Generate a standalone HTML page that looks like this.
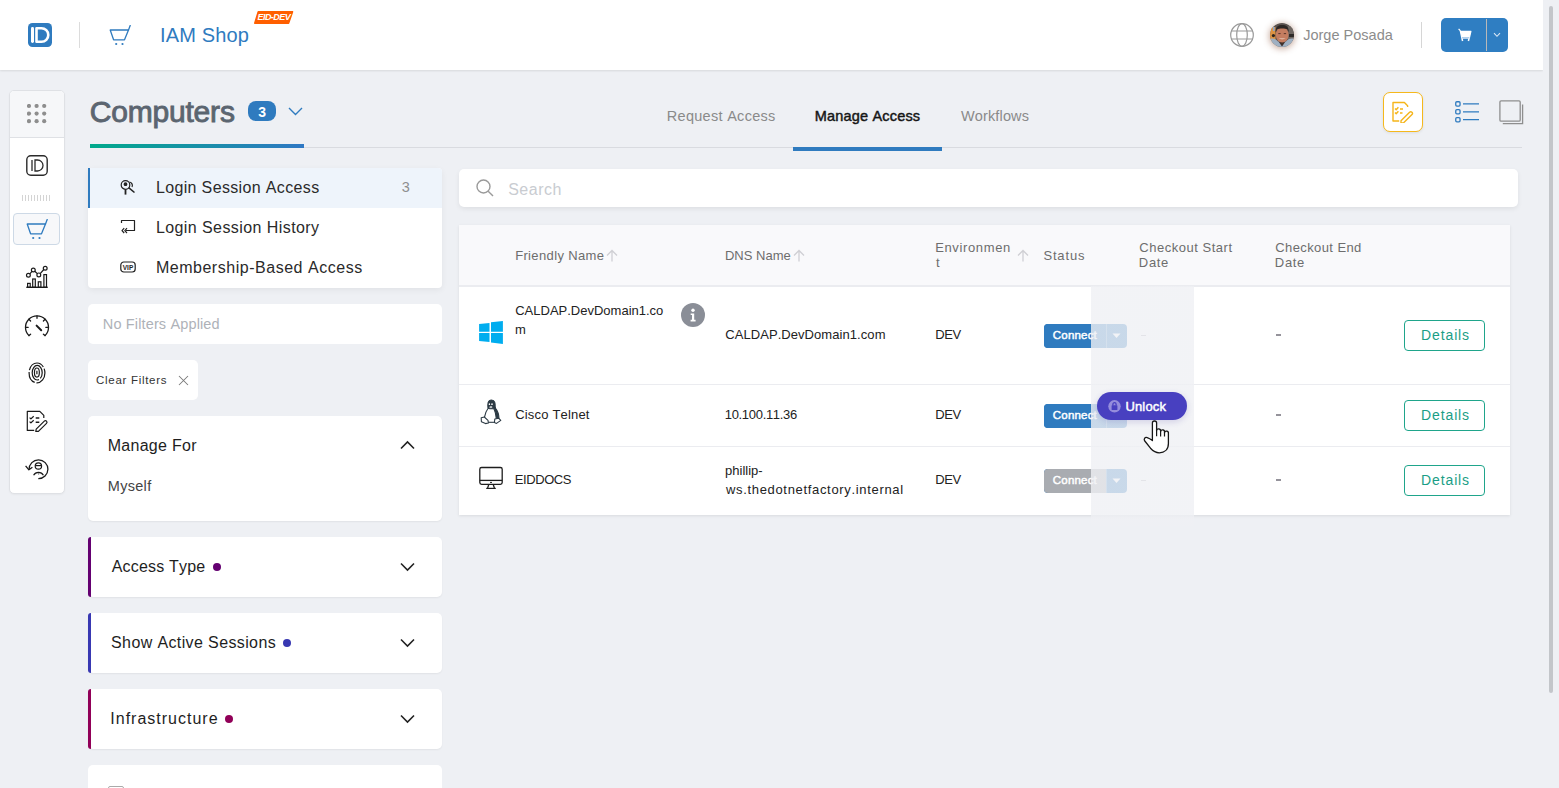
<!DOCTYPE html>
<html><head><meta charset="utf-8"><style>
html,body{margin:0;padding:0;}
body{width:1559px;height:788px;overflow:hidden;position:relative;background:#eef0f4;font-family:"Liberation Sans", sans-serif;font-kerning:none;}
.t{position:absolute;white-space:nowrap;font-family:"Liberation Sans", sans-serif;}
.b{position:absolute;}
</style></head><body>
<div class="b" style="left:0px;top:0px;width:1543px;height:70px;background:#fff;box-shadow:0 1px 2px rgba(0,0,0,0.10);"></div>
<svg class="b" style="left:28px;top:23px;" width="24" height="24" viewBox="0 0 24 24" ><rect x="0" y="0" width="24" height="24" rx="4.5" fill="#2f7bbf"/><rect x="3" y="4" width="3" height="16" rx="1.4" fill="#fff"/><path d="M8.5 5.2 h5 a6.8 6.8 0 0 1 0 13.6 h-5 z" fill="none" stroke="#fff" stroke-width="2.6" stroke-linejoin="round"/></svg>
<div class="b" style="left:79px;top:22px;width:1px;height:26px;background:#dcdcdc;"></div>
<svg class="b" style="left:109px;top:25px;" width="22" height="21" viewBox="0 0 22 21" ><path d="M1.2 5 H19.5 L15.5 14.8 H4.6 Z" fill="none" stroke="#2f7bbf" stroke-width="1.3" stroke-linejoin="round"/><path d="M19.5 5 L21.2 0.5" stroke="#2f7bbf" stroke-width="1.3" stroke-linecap="round"/><circle cx="7.2" cy="19" r="1.1" fill="#2f7bbf"/><circle cx="13.5" cy="19" r="1.1" fill="#2f7bbf"/></svg>
<div class="t" style="left:159.95px;top:22px;font-size:20px;line-height:26px;color:#2f7bbf;letter-spacing:0.166px;">IAM Shop</div>
<svg class="b" style="left:254px;top:11px;" width="40" height="13" viewBox="0 0 40 13" ><path d="M4.2 0.7 H38.6 L34.6 12.3 H0.7 Z" fill="#ff5f00" stroke="#ff5f00" stroke-width="1.4" stroke-linejoin="round"/></svg>
<div class="t" style="left:257.40px;top:11px;font-size:9px;line-height:12px;color:#fff;letter-spacing:-0.507px;font-weight:700;font-style:italic;">EID-DEV</div>
<svg class="b" style="left:1230px;top:23px;" width="24" height="24" viewBox="0 0 24 24" ><g fill="none" stroke="#9a9a9a" stroke-width="1.2"><circle cx="12" cy="12" r="11.3"/><ellipse cx="12" cy="12" rx="5.3" ry="11.3"/><path d="M1.5 8 H22.5 M1.5 16 H22.5"/></g></svg>
<div class="b" style="left:1270px;top:23px;width:24px;height:24px;border-radius:50%;box-shadow:0 1px 6px 1px rgba(140,80,50,0.45);"></div>
<svg class="b" style="left:1270px;top:23px;" width="24" height="24" viewBox="0 0 24 24" ><defs><clipPath id="av"><circle cx="12" cy="12" r="12"/></clipPath></defs><g clip-path="url(#av)"><rect width="24" height="24" fill="#5a524e"/><rect x="0" y="4" width="5.5" height="14" fill="#dc9240"/><circle cx="3.4" cy="12.6" r="1.6" fill="#2a2522"/><rect x="3" y="4" width="1.6" height="4" fill="#8fa6c8"/><rect x="18" y="3" width="6" height="15" fill="#6e6661"/><rect x="19" y="11" width="5" height="3" fill="#2e2a28"/><path d="M0 24 L0.5 16 C3 15 6 16 8 18.5 L16 18.5 C18 16 21 15 24 16 L24 24 Z" fill="#9fb0c2"/><path d="M8.5 18.5 L12 23.5 L15.5 18.5 Z" fill="#3e302b"/><ellipse cx="12.2" cy="11.8" rx="6.4" ry="7.8" fill="#c47d60"/><path d="M5.6 9.5 C5.4 3.5 8.5 2 12.2 2 C16 2 19 3.3 18.8 9.5 L17.6 6.5 C15 5.3 9.5 5.3 6.8 6.5 Z" fill="#2c2624"/><path d="M8.6 15 Q12.2 17.6 15.8 15 Q12.2 16.2 8.6 15 Z" fill="#f2e2d6"/><path d="M8.3 10.6 H10.6 M13.8 10.6 H16.1" stroke="#4e2f26" stroke-width="0.9"/></g></svg>
<div class="t" style="left:1303.17px;top:26px;font-size:14.5px;line-height:19px;color:#8c8c8c;letter-spacing:0.014px;">Jorge Posada</div>
<div class="b" style="left:1421px;top:22px;width:1px;height:26px;background:#d6d6d6;"></div>
<div class="b" style="left:1441px;top:18px;width:67px;height:34px;background:#2f7ec2;border-radius:5px;"></div>
<div class="b" style="left:1486px;top:19px;width:1px;height:32px;background:#b9b9b9;"></div>
<svg class="b" style="left:1458px;top:28px;" width="14" height="14" viewBox="0 0 14 14" ><path d="M0.6 0.8 L2.2 2.6 L3.9 10.3 H11.3 L12.9 3.3 H2.7" fill="#fff" stroke="#fff" stroke-width="1.2" stroke-linejoin="round"/><rect x="3.9" y="9.2" width="7.5" height="1.6" fill="#9cc3e6"/><path d="M4 10.5 L4.6 13 M11 10.5 L10.4 13" stroke="#fff" stroke-width="1.5"/></svg>
<svg class="b" style="left:1493px;top:32px;" width="8" height="6" viewBox="0 0 8 6" ><path d="M1 1.2 L4 4.3 L7 1.2" fill="none" stroke="#dbe8f5" stroke-width="1.1"/></svg>
<div class="b" style="left:1543px;top:0px;width:16px;height:788px;background:#eef0f4;"></div>
<div class="b" style="left:1549px;top:6px;width:4px;height:687px;background:#c3c6ca;border-radius:2px;"></div>
<div class="b" style="left:9px;top:90px;width:56px;height:404px;background:#fff;border:1px solid #dfe1e5;border-radius:5px;box-sizing:border-box;box-shadow:0 1px 2px rgba(0,0,0,0.04);"></div>
<div class="b" style="left:10px;top:91px;width:54px;height:46px;background:#f6f7f9;border-radius:4px 4px 0 0;border-bottom:1px solid #dfe1e5;"></div>
<svg class="b" style="left:27px;top:104px;" width="20" height="20" viewBox="0 0 20 20" ><circle cx="2.0" cy="2.0" r="2.1" fill="#8e8e8e"/><circle cx="2.0" cy="9.6" r="2.1" fill="#8e8e8e"/><circle cx="2.0" cy="17.2" r="2.1" fill="#8e8e8e"/><circle cx="9.6" cy="2.0" r="2.1" fill="#8e8e8e"/><circle cx="9.6" cy="9.6" r="2.1" fill="#8e8e8e"/><circle cx="9.6" cy="17.2" r="2.1" fill="#8e8e8e"/><circle cx="17.2" cy="2.0" r="2.1" fill="#8e8e8e"/><circle cx="17.2" cy="9.6" r="2.1" fill="#8e8e8e"/><circle cx="17.2" cy="17.2" r="2.1" fill="#8e8e8e"/></svg>
<svg class="b" style="left:26px;top:155px;" width="22" height="21" viewBox="0 0 22 21" ><rect x="0.8" y="0.8" width="20.4" height="19.4" rx="4" fill="none" stroke="#2b2b2b" stroke-width="1.4"/><path d="M6 5 V16 M9 5 V16 H11.5 A5.5 5.5 0 0 0 11.5 5 Z" fill="none" stroke="#2b2b2b" stroke-width="1.3"/></svg>
<svg class="b" style="left:22px;top:195px;" width="30" height="6" viewBox="0 0 30 6" ><rect x="0.0" y="0" width="1" height="6" fill="#d4d4d4"/><rect x="3.0" y="0" width="1" height="6" fill="#d4d4d4"/><rect x="6.0" y="0" width="1" height="6" fill="#d4d4d4"/><rect x="9.0" y="0" width="1" height="6" fill="#d4d4d4"/><rect x="12.0" y="0" width="1" height="6" fill="#d4d4d4"/><rect x="15.0" y="0" width="1" height="6" fill="#d4d4d4"/><rect x="18.0" y="0" width="1" height="6" fill="#d4d4d4"/><rect x="21.0" y="0" width="1" height="6" fill="#d4d4d4"/><rect x="24.0" y="0" width="1" height="6" fill="#d4d4d4"/><rect x="27.0" y="0" width="1" height="6" fill="#d4d4d4"/></svg>
<div class="b" style="left:13px;top:213px;width:47px;height:32px;background:#f7f8fa;border:1px solid #cdd9e6;border-radius:4px;box-sizing:border-box;"></div>
<svg class="b" style="left:26px;top:219px;" width="22" height="21" viewBox="0 0 22 21" ><path d="M1.2 5 H19.5 L15.5 14.8 H4.6 Z" fill="none" stroke="#2f7bbf" stroke-width="1.3" stroke-linejoin="round"/><path d="M19.5 5 L21.2 0.5" stroke="#2f7bbf" stroke-width="1.3" stroke-linecap="round"/><circle cx="7.2" cy="19" r="1.1" fill="#2f7bbf"/><circle cx="13.5" cy="19" r="1.1" fill="#2f7bbf"/></svg>
<svg class="b" style="left:20px;top:258px;" width="35" height="40" viewBox="0 0 35 40" ><g fill="none" stroke="#1a1a1a" stroke-width="1.2"><circle cx="8.4" cy="17.3" r="1.9"/><circle cx="13.3" cy="12" r="1.9"/><circle cx="18.8" cy="16.9" r="1.9"/><circle cx="25.2" cy="10.2" r="1.9"/><path d="M9.8 16 L11.9 13.3 M14.8 13.3 L17.3 15.6 M20.2 15.6 L23.8 11.5"/><rect x="7.6" y="25.4" width="2.6" height="3.9"/><rect x="12.7" y="21" width="2.6" height="8.3"/><rect x="18.3" y="23.8" width="2.6" height="5.5"/><rect x="23.9" y="16.6" width="2.6" height="12.7"/><path d="M6.3 29.3 H27.7" stroke-width="1.4"/></g></svg>
<svg class="b" style="left:20px;top:305px;" width="35" height="40" viewBox="0 0 35 40" ><g fill="none" stroke="#1a1a1a" stroke-width="1.3" stroke-linecap="round"><path d="M9 30.6 A11.5 11.5 0 1 1 25 30.6"/><path d="M9 30.6 L10.6 29.2 M25 30.6 L23.4 29.2"/><path d="M17 10.9 V13.3 M5.6 22.3 H8.2 M28.4 22.3 H25.8 M8.9 14.3 L10.6 16 M25.1 14.3 L23.4 16"/><path d="M16.6 20.6 L21.2 25.2" stroke-width="2"/></g></svg>
<svg class="b" style="left:20px;top:355px;" width="35" height="35" viewBox="0 0 35 35" ><g fill="none" stroke="#1a1a1a" stroke-width="1.2"><ellipse cx="17" cy="17.9" rx="7.9" ry="9.9" stroke-dasharray="14.5 1.8 12.5 1.8 19 1.8 5.1"/><ellipse cx="17.2" cy="17.7" rx="5" ry="7.3" stroke-dasharray="6 1.8 31.5"/><ellipse cx="16.9" cy="17.6" rx="2.45" ry="4.6"/><path d="M16.9 15.8 V19.2"/></g></svg>
<svg class="b" style="left:20px;top:405px;" width="35" height="80" viewBox="0 0 35 80" ><g fill="none" stroke="#1a1a1a" stroke-width="1.2" stroke-linejoin="round"><path d="M14.2 25.4 H7.3 V6.3 H19.8 L23.8 10.3 V13"/><path d="M9.6 12.6 L10.9 13.9 L13.7 11.2 M9.6 16.6 L10.9 17.9 L13.7 15.2"/><path d="M15.7 13 H19.3 M15.7 17.2 H19.3" stroke-width="1.4"/><path d="M15.8 26.4 L16.2 24.2 L24.3 16.1 A1.55 1.55 0 0 1 26.5 18.3 L18.4 26.4 Z"/><path d="M9.1 64.3 A9.4 9.4 0 1 1 18.3 73.6" stroke-width="1.3"/><path d="M5.6 60.8 L8.9 64.8 L12.4 62.2" stroke-width="1.3"/><circle cx="18.4" cy="61" r="3.2"/><path d="M15.3 60.6 H21.5"/><path d="M13.6 70.2 A5.6 5.6 0 0 1 23.4 70.2"/></g><circle cx="18.6" cy="68.9" r="0.6" fill="#555"/></svg>
<div class="b" style="left:90px;top:147px;width:1432px;height:1px;background:#d9dbe0;"></div>
<div class="t" style="left:89.78px;top:92px;font-size:30px;line-height:39px;color:#5b6570;letter-spacing:-0.201px;-webkit-text-stroke:0.9px #5b6570;">Computers</div>
<div class="b" style="left:248px;top:101px;width:28px;height:20px;background:#2f7bbf;border-radius:8px;"></div>
<div class="t" style="left:258.28px;top:103px;font-size:14px;line-height:19px;color:#fff;letter-spacing:0.000px;font-weight:700;">3</div>
<svg class="b" style="left:288px;top:107px;" width="15" height="9" viewBox="0 0 15 9" ><path d="M1 1 L7.5 7.5 L14 1" fill="none" stroke="#2f7bbf" stroke-width="1.4"/></svg>
<div class="b" style="left:90px;top:144px;width:214px;height:4px;background:linear-gradient(90deg,#00a98b,#2f78c4);"></div>
<div class="t" style="left:666.81px;top:107px;font-size:14.5px;line-height:19px;color:#8a8a8a;letter-spacing:0.288px;">Request Access</div>
<div class="t" style="left:814.81px;top:107px;font-size:14.5px;line-height:19px;color:#161616;letter-spacing:0.179px;-webkit-text-stroke:0.45px #161616;">Manage Access</div>
<div class="t" style="left:961.04px;top:107px;font-size:14.5px;line-height:19px;color:#8a8a8a;letter-spacing:0.128px;">Workflows</div>
<div class="b" style="left:793px;top:147px;width:149px;height:4px;background:#2f7bbf;"></div>
<div class="b" style="left:1383px;top:92px;width:40px;height:40px;background:#fff;border:1.5px solid #f5b81c;border-radius:7px;box-sizing:border-box;box-shadow:0 1px 3px rgba(0,0,0,0.08);"></div>
<svg class="b" style="left:1392px;top:101px;" width="22" height="22" viewBox="0 0 22 22" ><g fill="none" stroke="#f5b51a" stroke-width="1.4" stroke-linejoin="round"><path d="M7.2 20 H1 V1.5 H12.4 L15.6 4.7 V6"/><path d="M3 7.6 L4.2 8.8 L6.4 6.3 M3 11.6 L4.2 12.8 L6.4 10.3 M8 8 H11 M8 12 H10.5"/><path d="M9 19.8 L17.6 11.2 A1.7 1.7 0 0 1 20 13.6 L11.4 22 L9 22 Z"/></g></svg>
<svg class="b" style="left:1455px;top:101px;" width="25" height="22" viewBox="0 0 25 22" ><g fill="none" stroke="#2f7bbf" stroke-width="1.3"><rect x="0.75" y="0.75" width="4.3" height="4.3" rx="1.1"/><rect x="0.75" y="8.65" width="4.3" height="4.3" rx="1.1"/><rect x="0.75" y="16.55" width="4.3" height="4.3" rx="1.1"/><path d="M8 2.9 H24 M8 10.8 H24 M8 18.7 H24" stroke-width="1.3"/></g></svg>
<svg class="b" style="left:1499px;top:100px;" width="25" height="25" viewBox="0 0 25 25" ><g fill="none" stroke="#8e8e8e" stroke-width="1.3"><rect x="0.9" y="0.9" width="20.3" height="20.3" rx="1.2"/><path d="M23.6 4.5 V23.6 H3.8"/></g></svg>
<div class="b" style="left:88px;top:168px;width:354px;height:120px;background:#fff;border-radius:4px;box-shadow:0 2px 6px rgba(0,0,0,0.06);"></div>
<div class="b" style="left:88px;top:168px;width:354px;height:40px;background:#eef4fb;border-radius:4px 4px 0 0;"></div>
<div class="b" style="left:88px;top:168px;width:2px;height:40px;background:#2f7bbf;"></div>
<svg class="b" style="left:120px;top:179px;" width="16" height="17" viewBox="0 0 16 17" ><g fill="none" stroke="#222" stroke-width="1.2"><circle cx="5.5" cy="6" r="4.3"/><circle cx="5.5" cy="5.2" r="1.3" fill="#222"/><path d="M5.5 10.3 V15.6" stroke-width="1.8"/><path d="M8.6 8.6 L14.5 13.5" stroke-width="1.5"/><path d="M9.5 3 A3.5 3.5 0 0 1 12 8"/></g></svg>
<svg class="b" style="left:120px;top:219px;" width="16" height="17" viewBox="0 0 16 17" ><g fill="none" stroke="#222" stroke-width="1.2" stroke-linejoin="round"><path d="M1.5 4 V1.5 H14.5 V11.5 H6"/><path d="M4.2 9.2 L2 11.6 L4.2 14 M7 9.2 L4.8 11.6 L7 14"/></g></svg>
<svg class="b" style="left:120px;top:261px;" width="16" height="12" viewBox="0 0 16 12" ><g fill="none" stroke="#222" stroke-width="1.2"><rect x="0.8" y="1" width="14.4" height="10" rx="3"/></g><text x="8" y="8.6" font-size="6.5" font-weight="700" text-anchor="middle" fill="#222" font-family="Liberation Sans">VIP</text></svg>
<div class="t" style="left:155.89px;top:177px;font-size:16px;line-height:21px;color:#2a2a2a;letter-spacing:0.356px;">Login Session Access</div>
<div class="t" style="left:401.85px;top:178px;font-size:14.5px;line-height:19px;color:#8e8e8e;letter-spacing:0.000px;">3</div>
<div class="t" style="left:155.89px;top:217px;font-size:16px;line-height:21px;color:#2a2a2a;letter-spacing:0.425px;">Login Session History</div>
<div class="t" style="left:155.89px;top:257px;font-size:16px;line-height:21px;color:#2a2a2a;letter-spacing:0.525px;">Membership-Based Access</div>
<div class="b" style="left:88px;top:304px;width:354px;height:40px;background:#fff;border-radius:5px;"></div>
<div class="t" style="left:102.81px;top:315px;font-size:14.5px;line-height:19px;color:#aeb2b8;letter-spacing:0.141px;">No Filters Applied</div>
<div class="b" style="left:88px;top:360px;width:110px;height:40px;background:#fff;border-radius:5px;"></div>
<div class="t" style="left:96.02px;top:373px;font-size:11.5px;line-height:15px;color:#333;letter-spacing:0.710px;">Clear Filters</div>
<svg class="b" style="left:178px;top:375px;" width="11" height="11" viewBox="0 0 11 11" ><path d="M1 1 L10 10 M10 1 L1 10" stroke="#7a7a7a" stroke-width="1.05"/></svg>
<div class="b" style="left:88px;top:416px;width:354px;height:105px;background:#fff;border-radius:5px;box-shadow:0 1px 2px rgba(0,0,0,0.06);"></div>
<div class="t" style="left:107.69px;top:435px;font-size:16px;line-height:21px;color:#1e1e1e;letter-spacing:0.279px;">Manage For</div>
<svg class="b" style="left:400px;top:440px;" width="15" height="10" viewBox="0 0 15 10" ><path d="M1 8.5 L7.5 2 L14 8.5" fill="none" stroke="#222" stroke-width="1.6"/></svg>
<div class="t" style="left:107.81px;top:477px;font-size:14.5px;line-height:19px;color:#444;letter-spacing:0.295px;">Myself</div>
<div class="b" style="left:88px;top:537px;width:354px;height:60px;background:#fff;border-radius:5px;box-shadow:0 1px 2px rgba(0,0,0,0.06);"></div>
<div class="b" style="left:88px;top:537px;width:3px;height:60px;background:#640071;border-radius:3px 0 0 3px;"></div>
<div class="t" style="left:111.77px;top:556px;font-size:16px;line-height:21px;color:#1e1e1e;letter-spacing:0.176px;">Access Type</div>
<div class="b" style="left:212.8px;top:563px;width:8px;height:8px;border-radius:50%;background:#640071;"></div>
<svg class="b" style="left:400px;top:562px;" width="15" height="10" viewBox="0 0 15 10" ><path d="M1 1.5 L7.5 8 L14 1.5" fill="none" stroke="#222" stroke-width="1.6"/></svg>
<div class="b" style="left:88px;top:613px;width:354px;height:60px;background:#fff;border-radius:5px;box-shadow:0 1px 2px rgba(0,0,0,0.06);"></div>
<div class="b" style="left:88px;top:613px;width:3px;height:60px;background:#3838b2;border-radius:3px 0 0 3px;"></div>
<div class="t" style="left:111.07px;top:632px;font-size:16px;line-height:21px;color:#1e1e1e;letter-spacing:0.379px;">Show Active Sessions</div>
<div class="b" style="left:282.9px;top:639px;width:8px;height:8px;border-radius:50%;background:#3838b2;"></div>
<svg class="b" style="left:400px;top:638px;" width="15" height="10" viewBox="0 0 15 10" ><path d="M1 1.5 L7.5 8 L14 1.5" fill="none" stroke="#222" stroke-width="1.6"/></svg>
<div class="b" style="left:88px;top:689px;width:354px;height:60px;background:#fff;border-radius:5px;box-shadow:0 1px 2px rgba(0,0,0,0.06);"></div>
<div class="b" style="left:88px;top:689px;width:3px;height:60px;background:#910058;border-radius:3px 0 0 3px;"></div>
<div class="t" style="left:110.32px;top:708px;font-size:16px;line-height:21px;color:#1e1e1e;letter-spacing:1.002px;">Infrastructure</div>
<div class="b" style="left:225.0px;top:715px;width:8px;height:8px;border-radius:50%;background:#910058;"></div>
<svg class="b" style="left:400px;top:714px;" width="15" height="10" viewBox="0 0 15 10" ><path d="M1 1.5 L7.5 8 L14 1.5" fill="none" stroke="#222" stroke-width="1.6"/></svg>
<div class="b" style="left:88px;top:765px;width:354px;height:40px;background:#fff;border-radius:5px;"></div>
<div class="b" style="left:108px;top:786px;width:16px;height:16px;border:1px solid #aaa;border-radius:2px;box-sizing:border-box;"></div>
<div class="b" style="left:459px;top:169px;width:1059px;height:38px;background:#fff;border-radius:5px;box-shadow:0 2px 5px rgba(0,0,0,0.07);"></div>
<svg class="b" style="left:476px;top:179px;" width="18" height="18" viewBox="0 0 18 18" ><g fill="none" stroke="#9a9a9a" stroke-width="1.4"><circle cx="7.5" cy="7.5" r="6.5"/><path d="M12.2 12.2 L17 17"/></g></svg>
<div class="t" style="left:508.17px;top:179px;font-size:16px;line-height:21px;color:#c9ccd1;letter-spacing:0.514px;">Search</div>
<div class="b" style="left:459px;top:225px;width:1051px;height:290px;background:#fff;box-shadow:0 1px 3px rgba(0,0,0,0.09);"></div>
<div class="b" style="left:459px;top:225px;width:1051px;height:60px;background:#f9f9fb;"></div>
<div class="b" style="left:459px;top:285px;width:1051px;height:2px;background:#ebecf0;"></div>
<div class="b" style="left:459px;top:384px;width:1051px;height:1px;background:#ebecf0;"></div>
<div class="b" style="left:459px;top:446px;width:1051px;height:1px;background:#ebecf0;"></div>
<div class="t" style="left:515.13px;top:247px;font-size:13px;line-height:17px;color:#6d6d6d;letter-spacing:0.360px;">Friendly Name</div>
<svg class="b" style="left:606px;top:249px;" width="12" height="13" viewBox="0 0 12 13" ><path d="M6 12.5 V1.5 M1 6.5 L6 1.5 L11 6.5" fill="none" stroke="#cfcfd4" stroke-width="1.3"/></svg>
<div class="t" style="left:724.93px;top:247px;font-size:13px;line-height:17px;color:#6d6d6d;letter-spacing:0.015px;">DNS Name</div>
<svg class="b" style="left:793px;top:249px;" width="12" height="13" viewBox="0 0 12 13" ><path d="M6 12.5 V1.5 M1 6.5 L6 1.5 L11 6.5" fill="none" stroke="#cfcfd4" stroke-width="1.3"/></svg>
<div class="t" style="left:935.13px;top:239px;font-size:13px;line-height:17px;color:#6d6d6d;letter-spacing:0.649px;">Environmen</div>
<div class="t" style="left:936.00px;top:254px;font-size:13px;line-height:17px;color:#6d6d6d;letter-spacing:0.000px;">t</div>
<svg class="b" style="left:1017px;top:249px;" width="12" height="13" viewBox="0 0 12 13" ><path d="M6 12.5 V1.5 M1 6.5 L6 1.5 L11 6.5" fill="none" stroke="#cfcfd4" stroke-width="1.3"/></svg>
<div class="t" style="left:1043.41px;top:247px;font-size:13px;line-height:17px;color:#6d6d6d;letter-spacing:0.841px;">Status</div>
<div class="t" style="left:1139.24px;top:239px;font-size:13px;line-height:17px;color:#6d6d6d;letter-spacing:0.528px;">Checkout Start</div>
<div class="t" style="left:1138.83px;top:254px;font-size:13px;line-height:17px;color:#6d6d6d;letter-spacing:0.661px;">Date</div>
<div class="t" style="left:1275.24px;top:239px;font-size:13px;line-height:17px;color:#6d6d6d;letter-spacing:0.403px;">Checkout End</div>
<div class="t" style="left:1274.83px;top:254px;font-size:13px;line-height:17px;color:#6d6d6d;letter-spacing:0.661px;">Date</div>
<svg class="b" style="left:474px;top:316px;" width="34" height="34" viewBox="0 0 34 34" ><path d="M5.1 8 L15.5 6.9 V15.7 H5.1 Z M17 6.25 L28.9 5 V15.7 H17 Z M5.1 17 H15.5 V25.9 L5.1 24.9 Z M17 17 H28.9 V27.9 L17 26.5 Z" fill="#00adef"/></svg>
<div class="t" style="left:515.24px;top:302px;font-size:13px;line-height:17px;color:#222;letter-spacing:-0.001px;">CALDAP.DevDomain1.co</div>
<div class="t" style="left:515.04px;top:321px;font-size:13px;line-height:17px;color:#222;letter-spacing:0.000px;">m</div>
<div class="b" style="left:681px;top:303px;width:24px;height:24px;border-radius:50%;background:#8a8e97;"></div>
<svg class="b" style="left:681px;top:303px;" width="24" height="24" viewBox="0 0 24 24" ><circle cx="12" cy="7.3" r="1.7" fill="#fff"/><path d="M9.7 10.5 H13.2 V16.8 H14.6 V18.4 H9.6 V16.8 H11 V12.1 H9.7 Z" fill="#fff"/></svg>
<div class="t" style="left:725.24px;top:326px;font-size:13px;line-height:17px;color:#222;letter-spacing:0.064px;">CALDAP.DevDomain1.com</div>
<div class="t" style="left:935.33px;top:326px;font-size:13px;line-height:17px;color:#222;letter-spacing:-0.503px;">DEV</div>
<svg class="b" style="left:474px;top:394px;" width="34" height="34" viewBox="0 0 34 34" ><g stroke="#2c3a44" stroke-width="1.1" fill="none" stroke-linejoin="round"><path d="M14 14.2 C13.5 10 13.8 6 17.5 6 C21 6 21.3 9.5 21.2 13 L21.4 14.2 C19.5 14.8 16 14.8 14 14.2 Z" fill="#2c3a44"/><path d="M14 14.5 C12 17 11 20 10.5 23.2"/><path d="M21 13.5 C23.5 16.5 25 20 25 24.5 L22.3 24.6 C22 20 21 17 20 15 Z" fill="#2c3a44"/><path d="M7.2 23.8 L10.3 23 L14 26.3 L14.4 29 L11.5 29.6 L7.4 27.8 Z" fill="#fff"/><path d="M20.8 25 L24.8 24.3 L26.8 26.4 L22.5 29.4 L20.4 28.6 Z" fill="#fff"/><path d="M14.4 28.3 H20.4"/></g><ellipse cx="15.4" cy="10.2" rx="0.7" ry="0.9" fill="#fff"/><ellipse cx="18" cy="10.2" rx="0.8" ry="0.9" fill="#fff"/><path d="M15 13.3 Q16.8 11.6 18.6 12.9 Q16.8 14.4 15 13.3Z" fill="#fff"/></svg>
<div class="t" style="left:515.24px;top:406px;font-size:13px;line-height:17px;color:#222;letter-spacing:0.182px;">Cisco Telnet</div>
<div class="t" style="left:724.71px;top:406px;font-size:13px;line-height:17px;color:#222;letter-spacing:-0.304px;">10.100.11.36</div>
<div class="t" style="left:935.33px;top:406px;font-size:13px;line-height:17px;color:#222;letter-spacing:-0.503px;">DEV</div>
<svg class="b" style="left:474px;top:460px;" width="34" height="34" viewBox="0 0 34 34" ><g fill="none" stroke="#1e1e1e" stroke-width="1.3"><rect x="5.8" y="7.5" width="22.4" height="16.8" rx="1.8"/><path d="M5.8 20.4 H28.2"/><path d="M14.8 24.5 L13.6 28 M19.2 24.5 L20.4 28"/><path d="M12.2 28.4 H21.8" stroke-width="1.2"/></g><ellipse cx="17" cy="22.4" rx="1" ry="0.7" fill="#1e1e1e"/></svg>
<div class="t" style="left:514.83px;top:471px;font-size:13px;line-height:17px;color:#222;letter-spacing:-0.428px;">EIDDOCS</div>
<div class="t" style="left:725.06px;top:462px;font-size:13px;line-height:17px;color:#222;letter-spacing:0.000px;">phillip-</div>
<div class="t" style="left:725.92px;top:481px;font-size:13px;line-height:17px;color:#222;letter-spacing:0.677px;">ws.thedotnetfactory.internal</div>
<div class="t" style="left:935.33px;top:471px;font-size:13px;line-height:17px;color:#222;letter-spacing:-0.503px;">DEV</div>
<div class="b" style="left:1044px;top:324px;width:83px;height:24px;background:#2f7bbf;border-radius:4px;"></div>
<div class="b" style="left:1044px;top:324px;width:62px;height:24px;background:#2f7bbf;border-radius:4px 0 0 4px;"></div>
<div class="b" style="left:1106px;top:324px;width:1px;height:24px;background:rgba(255,255,255,0.3);"></div>
<div class="t" style="left:1052.82px;top:328px;font-size:11.5px;line-height:15px;color:#fff;letter-spacing:0.189px;-webkit-text-stroke:0.45px #fff;">Connect</div>
<svg class="b" style="left:1112px;top:333px;" width="9" height="6" viewBox="0 0 9 6" ><path d="M0.5 0.5 H8.5 L4.5 5 Z" fill="#fff"/></svg>
<div class="b" style="left:1044px;top:404px;width:83px;height:24px;background:#2f7bbf;border-radius:4px;"></div>
<div class="b" style="left:1044px;top:404px;width:62px;height:24px;background:#2f7bbf;border-radius:4px 0 0 4px;"></div>
<div class="b" style="left:1106px;top:404px;width:1px;height:24px;background:rgba(255,255,255,0.3);"></div>
<div class="t" style="left:1052.82px;top:408px;font-size:11.5px;line-height:15px;color:#fff;letter-spacing:0.189px;-webkit-text-stroke:0.45px #fff;">Connect</div>
<svg class="b" style="left:1112px;top:413px;" width="9" height="6" viewBox="0 0 9 6" ><path d="M0.5 0.5 H8.5 L4.5 5 Z" fill="#fff"/></svg>
<div class="b" style="left:1044px;top:469px;width:83px;height:24px;background:#2f7bbf;border-radius:4px;"></div>
<div class="b" style="left:1044px;top:469px;width:62px;height:24px;background:#a9acb1;border-radius:4px 0 0 4px;"></div>
<div class="b" style="left:1106px;top:469px;width:1px;height:24px;background:rgba(255,255,255,0.3);"></div>
<div class="t" style="left:1052.82px;top:473px;font-size:11.5px;line-height:15px;color:#fff;letter-spacing:0.189px;-webkit-text-stroke:0.45px #fff;">Connect</div>
<svg class="b" style="left:1112px;top:478px;" width="9" height="6" viewBox="0 0 9 6" ><path d="M0.5 0.5 H8.5 L4.5 5 Z" fill="#fff"/></svg>
<div class="b" style="left:1141px;top:334.5px;width:5px;height:1.5px;background:#b3b1b8;"></div>
<div class="b" style="left:1276px;top:334px;width:4.5px;height:2px;background:#95939b;"></div>
<div class="b" style="left:1141px;top:414.5px;width:5px;height:1.5px;background:#b3b1b8;"></div>
<div class="b" style="left:1276px;top:414px;width:4.5px;height:2px;background:#95939b;"></div>
<div class="b" style="left:1141px;top:479.5px;width:5px;height:1.5px;background:#b3b1b8;"></div>
<div class="b" style="left:1276px;top:479px;width:4.5px;height:2px;background:#95939b;"></div>
<div class="b" style="left:1404px;top:320px;width:81px;height:31px;border:1px solid #1fa58b;border-radius:4px;box-sizing:border-box;background:#fff;"></div>
<div class="t" style="left:1421.05px;top:326px;font-size:14px;line-height:19px;color:#1a9e86;letter-spacing:0.877px;">Details</div>
<div class="b" style="left:1404px;top:400px;width:81px;height:31px;border:1px solid #1fa58b;border-radius:4px;box-sizing:border-box;background:#fff;"></div>
<div class="t" style="left:1421.05px;top:406px;font-size:14px;line-height:19px;color:#1a9e86;letter-spacing:0.877px;">Details</div>
<div class="b" style="left:1404px;top:465px;width:81px;height:31px;border:1px solid #1fa58b;border-radius:4px;box-sizing:border-box;background:#fff;"></div>
<div class="t" style="left:1421.05px;top:471px;font-size:14px;line-height:19px;color:#1a9e86;letter-spacing:0.877px;">Details</div>
<div class="b" style="left:1091px;top:286px;width:103px;height:240px;background:linear-gradient(to bottom, rgba(239,240,244,0.8) 0, rgba(239,240,244,0.8) 228px, rgba(239,240,244,0.5) 240px);"></div>
<div class="b" style="left:1097px;top:392px;width:90px;height:28px;background:#4840c0;border-radius:14px;box-shadow:0 2px 6px rgba(60,50,160,0.18);"></div>
<svg class="b" style="left:1108.4px;top:400.2px;" width="13" height="13" viewBox="0 0 13 13" ><circle cx="6.5" cy="6.3" r="6.2" fill="#958ddc"/><rect x="3.6" y="5.2" width="5.8" height="4.8" rx="0.6" fill="#4840c0"/><path d="M4.9 5.6 V4.3 A1.6 1.6 0 0 1 8.1 4.3 V5.6" fill="none" stroke="#4840c0" stroke-width="1.3"/></svg>
<div class="t" style="left:1125.40px;top:398px;font-size:13px;line-height:17px;color:#fff;letter-spacing:0.170px;-webkit-text-stroke:0.45px #fff;">Unlock</div>
<svg class="b" style="left:1135px;top:415px;" width="45" height="45" viewBox="0 0 45 45" ><path d="M17.4 25.6 V8.1 A2.1 2.1 0 0 1 21.6 8.1 V15.8 A2 2 0 0 1 25.6 16 V16.6 A1.95 1.95 0 0 1 29.5 17.2 V17.8 A1.95 1.95 0 0 1 33.4 18.4 V28.5 C33.4 34.5 29.5 37.8 24.3 37.8 C20.5 37.8 18 36 15.5 33.2 L9.8 26 C8.4 24.2 9.8 21.9 12.2 22.6 C14.3 23.3 16 24.5 17.4 25.6 Z" fill="#fff" stroke="#161616" stroke-width="1.3" stroke-linejoin="round"/><path d="M21.6 15.8 V21.3 M25.6 16.6 V21.6 M29.5 17.8 V21.6" stroke="#161616" stroke-width="1.2"/></svg>
</body></html>
